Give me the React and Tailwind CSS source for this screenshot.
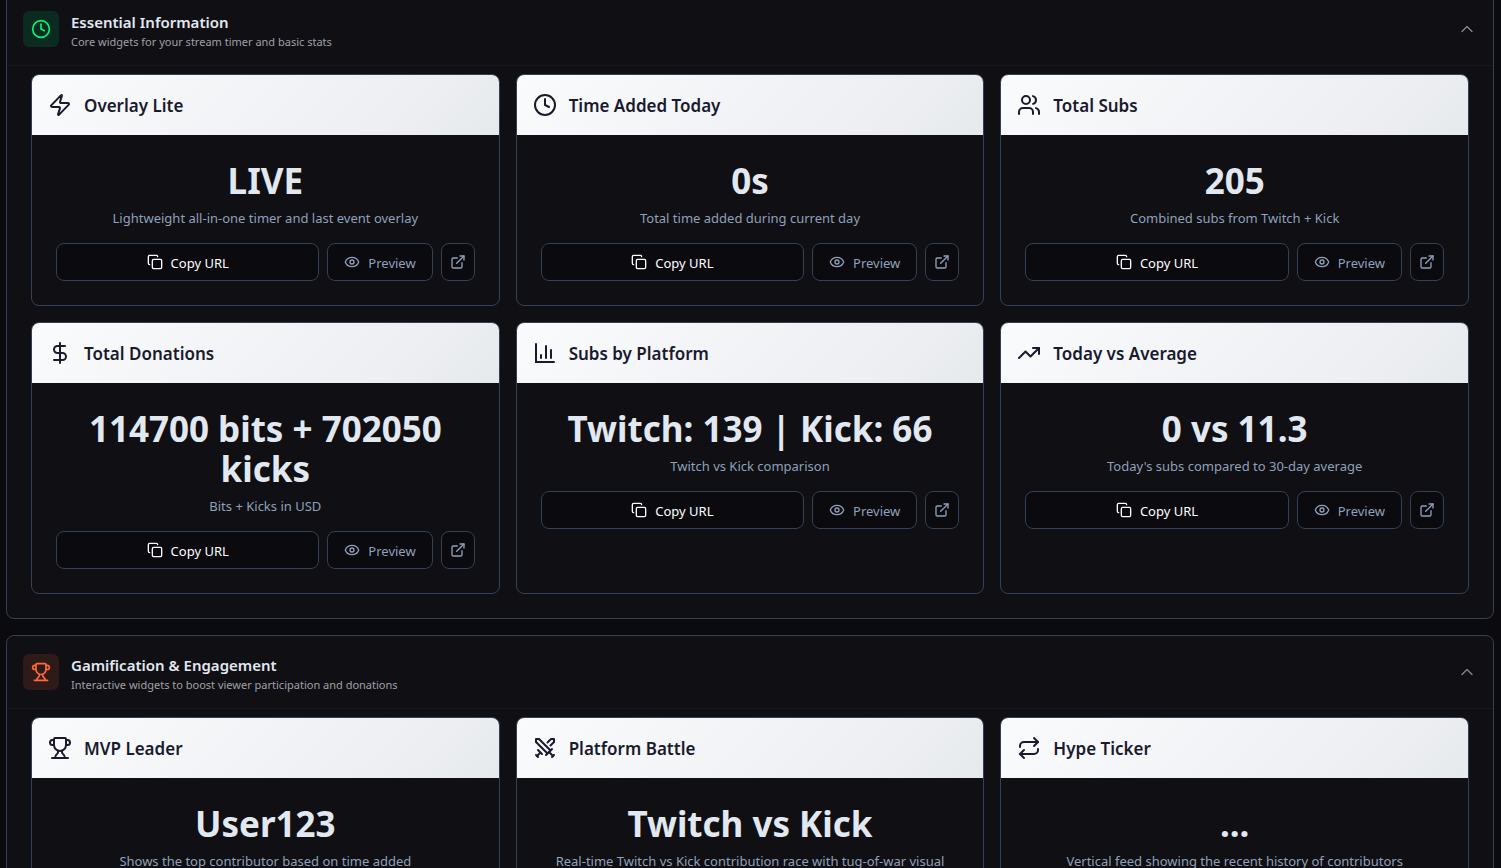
import {
  ChevronUp,
  Clock,
  Copy,
  DollarSign,
  ExternalLink,
  Eye,
  Repeat,
  Swords,
  TrendingUp,
  Trophy,
  Users,
  Zap,
} from "lucide-react";

function BarChart({ className }) {
  return (
    <svg
      className={className}
      viewBox="0 0 24 24"
      fill="none"
      stroke="currentColor"
      strokeWidth="2"
      strokeLinecap="round"
      aria-hidden="true"
    >
      <path d="M3 3v18h18" />
      <path d="M18 17V9" />
      <path d="M13 17V5" />
      <path d="M8 17v-3" />
    </svg>
  );
}

const sections = [
  {
    title: "Essential Information",
    subtitle: "Core widgets for your stream timer and basic stats",
    icon: Clock,
    iconClass: "bg-[#0c2b20] text-[#00f57a]",
    widgets: [
      { icon: Zap, title: "Overlay Lite", value: "LIVE", text: "Lightweight all-in-one timer and last event overlay" },
      { icon: Clock, title: "Time Added Today", value: "0s", text: "Total time added during current day" },
      { icon: Users, title: "Total Subs", value: "205", text: "Combined subs from Twitch + Kick" },
      { icon: DollarSign, title: "Total Donations", value: "114700 bits + 702050 kicks", text: "Bits + Kicks in USD" },
      { icon: BarChart, title: "Subs by Platform", value: "Twitch: 139 | Kick: 66", text: "Twitch vs Kick comparison" },
      { icon: TrendingUp, title: "Today vs Average", value: "0 vs 11.3", text: "Today's subs compared to 30-day average" },
    ],
  },
  {
    title: "Gamification & Engagement",
    subtitle: "Interactive widgets to boost viewer participation and donations",
    icon: Trophy,
    iconClass: "bg-[#2d1a19] text-[#ff6b35]",
    widgets: [
      { icon: Trophy, title: "MVP Leader", value: "User123", text: "Shows the top contributor based on time added" },
      { icon: Swords, title: "Platform Battle", value: "Twitch vs Kick", text: "Real-time Twitch vs Kick contribution race with tug-of-war visual" },
      { icon: Repeat, title: "Hype Ticker", value: "...", text: "Vertical feed showing the recent history of contributors" },
    ],
  },
];

function WidgetCard({ icon: Icon, title, value, text }) {
  return (
    <article className="overflow-hidden rounded-lg border border-[#334155] bg-[#0f0f14]">
      <header className="flex items-center gap-3 bg-linear-135 from-[#fafbfd] via-[#eeeff2] via-75% to-[#e6eaed] p-4 text-[#1a1a2e]">
        <Icon className="size-6 shrink-0" />
        <h3 className="pt-0.5 text-[17px] leading-[26px] font-semibold">{title}</h3>
      </header>
      <div className="px-6 pt-[26px] pb-6 text-center">
        <p className="text-[35px] leading-10 font-bold text-slate-200">{value}</p>
        <p className="mt-[7px] mb-[15px] text-[13px] leading-5 text-slate-400">{text}</p>
        <div className="flex gap-2 text-[13px] leading-5">
          <button type="button" className="flex h-[38px] flex-1 items-center justify-center gap-2 rounded-lg border border-[#334155] bg-[#0a0a0f] text-white">
            <Copy className="size-4" />
            <span className="pt-0.5">Copy URL</span>
          </button>
          <button type="button" className="flex h-[38px] items-center gap-2 rounded-lg border border-[#334155] bg-[#0a0a0f] px-4 text-slate-400">
            <Eye className="size-4" />
            <span className="pt-0.5">Preview</span>
          </button>
          <button type="button" aria-label="Open in new tab" className="flex h-[38px] items-center rounded-lg border border-[#334155] bg-[#0a0a0f] px-2 text-slate-400">
            <ExternalLink className="size-4" />
          </button>
        </div>
      </div>
    </article>
  );
}

function Section({ title, subtitle, icon: Icon, iconClass, widgets }) {
  return (
    <section className="rounded-lg border border-[#334155] bg-[#0f0f14]">
      <button type="button" aria-expanded="true" className="flex w-full items-center gap-3 border-b border-[#18181e] px-4 py-[13px] text-left">
        <span className={`flex size-9 shrink-0 items-center justify-center rounded-md ${iconClass}`}>
          <Icon className="size-5" />
        </span>
        <span className="flex-1 pt-1.5">
          <span className="block text-[15px] leading-5 font-semibold text-slate-200">{title}</span>
          <span className="block text-[11px] leading-5 text-[#a0a0a8]">{subtitle}</span>
        </span>
        <ChevronUp className="size-5 text-[#8a8a8e]" strokeWidth={1.5} />
      </button>
      <div className="grid grid-cols-3 gap-4 px-6 pt-2 pb-6">
        {widgets.map((w) => (
          <WidgetCard key={w.title} {...w} />
        ))}
      </div>
    </section>
  );
}

export default function App() {
  return (
    <div className="h-screen overflow-hidden bg-[#0a0a0f] font-['Noto_Sans','Open_Sans',sans-serif]">
      <main className="-mt-2 flex flex-col gap-4 pr-[7px] pl-1.5">
        {sections.map((s) => (
          <Section key={s.title} {...s} />
        ))}
      </main>
    </div>
  );
}
